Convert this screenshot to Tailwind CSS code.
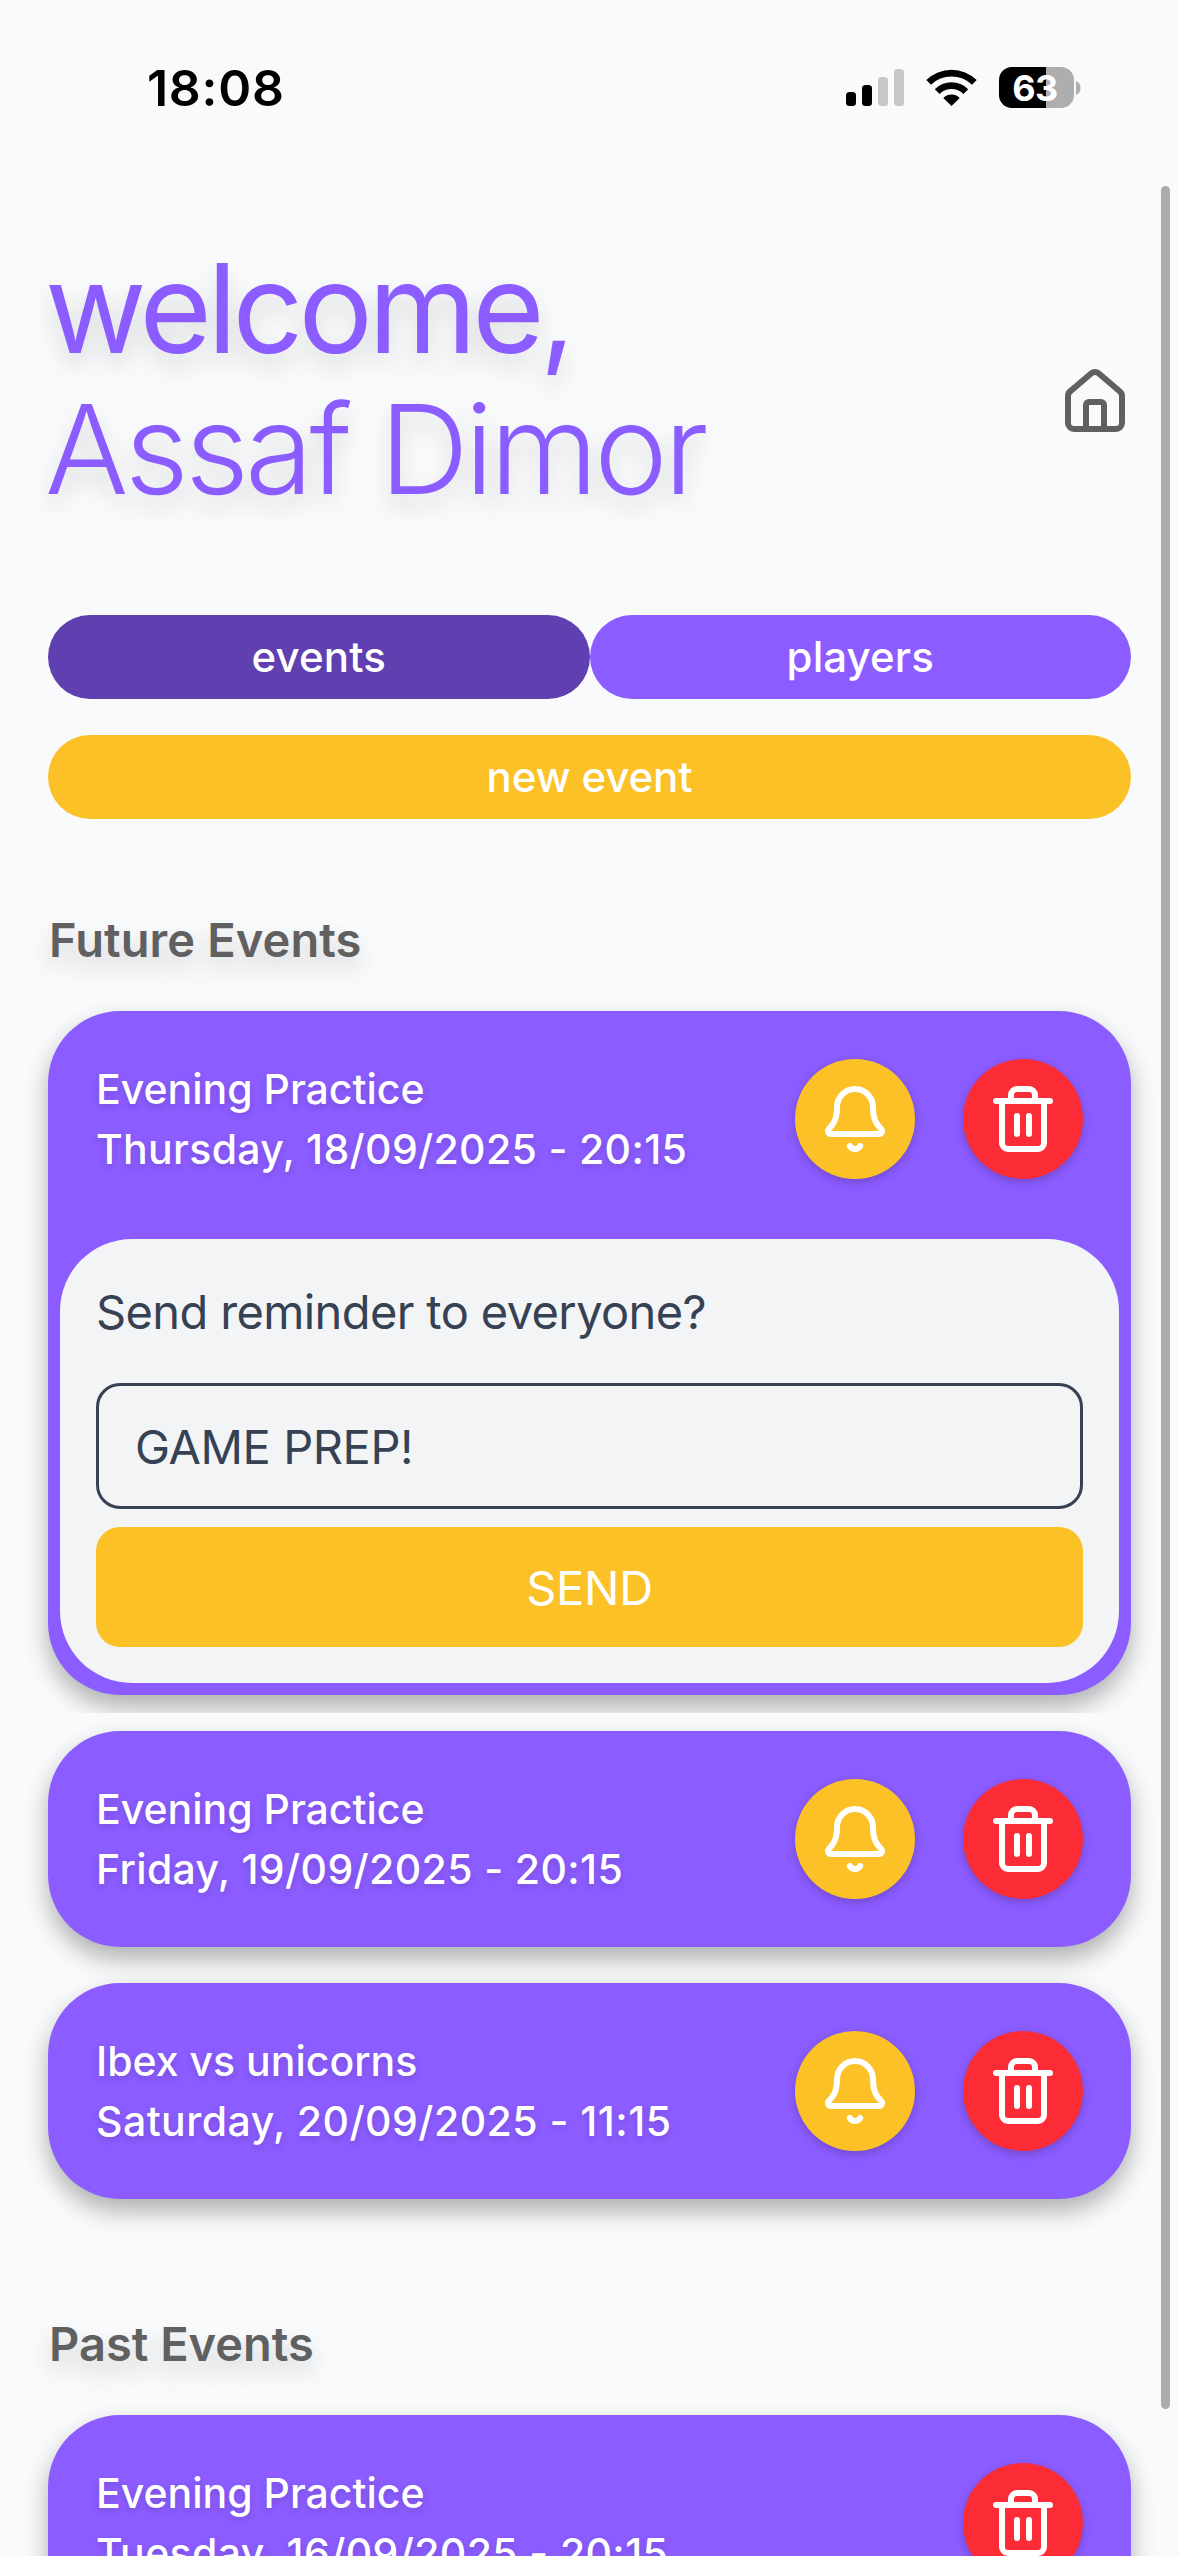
<!DOCTYPE html>
<html lang="en">
<head>
<meta charset="utf-8">
<title>Events</title>
<script src="https://cdn.jsdelivr.net/npm/@tailwindcss/browser@4"></script>
</head>
<body class="relative h-[2556px] w-[1179px] overflow-hidden bg-[#f9fafc] font-['Inter',sans-serif] text-white">

<svg class="hidden">
  <symbol id="bell" viewBox="0 0 24 24" fill="none" stroke="currentColor" stroke-width="2" stroke-linecap="round" stroke-linejoin="round">
    <path d="M10.268 21a2 2 0 0 0 3.464 0"/>
    <path d="M3.262 15.326A1 1 0 0 0 4 17h16a1 1 0 0 0 .74-1.673C19.41 13.956 18 12.499 18 8A6 6 0 0 0 6 8c0 4.499-1.411 5.956-2.738 7.326"/>
  </symbol>
  <symbol id="trash" viewBox="0 0 24 24" fill="none" stroke="currentColor" stroke-width="2" stroke-linecap="round" stroke-linejoin="round">
    <path d="M3 6h18M19 6v14a2 2 0 0 1-2 2H7a2 2 0 0 1-2-2V6M8 6V4a2 2 0 0 1 2-2h4a2 2 0 0 1 2 2v2M10 11v6M14 11v6"/>
  </symbol>
</svg>

<!-- Status bar -->
<div class="flex h-[186px] items-start justify-between pl-[147px] pr-[98px] text-black">
  <div class="mt-[58px] text-[50px] leading-[60px] font-semibold tracking-[0.7px]">18:08</div>
  <div class="mt-[67px] flex h-[41px] items-center">
    <svg class="h-[37px] w-[58px]" viewBox="0 0 58 37">
      <rect x="0" y="23" width="10" height="14" rx="3.5"/>
      <rect x="16" y="16" width="10" height="21" rx="3.5"/>
      <rect x="32" y="8" width="10" height="29" rx="3.5" fill="#c7c7c8"/>
      <rect x="48" y="0" width="10" height="37" rx="3.5" fill="#c7c7c8"/>
    </svg>
    <svg class="ml-[22px] h-[37px] w-[51px]" viewBox="0 0 51 37">
      <path d="M0.3 11 A36 36 0 0 1 50.7 11 L46 15.8 A29.3 29.3 0 0 0 5 15.8 Z"/>
      <path d="M8.8 20.2 A23.5 23.5 0 0 1 42.2 20.2 L37.4 25 A16.8 16.8 0 0 0 13.6 25 Z"/>
      <path d="M17.3 29 A11.6 11.6 0 0 1 33.7 29 L25.5 37 Z"/>
    </svg>
    <div class="ml-[22px] flex h-[41px] w-[75px] items-center justify-center rounded-[13px] bg-linear-to-r from-black from-[62.5%] to-[#aeaeb0] to-[62.5%]">
      <span class="mr-[3px] pt-px text-[36px] leading-[41px] font-bold tracking-[-0.5px] text-white">63</span>
    </div>
    <svg class="ml-[2px] h-[14px] w-[5px]" viewBox="0 0 5 14"><path d="M0 0Q4.500 2 4.500 7T0 14Z" fill="#aeaeb0"/></svg>
  </div>
</div>

<main class="px-12">
  <!-- Greeting -->
  <header class="flex h-[429px] items-start justify-between pt-[52px]">
    <h1 class="text-[124px] leading-[141px] font-normal text-[#8b5cff] [text-shadow:0_12px_24px_rgba(0,0,0,0.15)]">
      <span class="-ml-[3px] block tracking-[-4.7px]">welcome,</span>
      <span class="-ml-[3px] block font-light tracking-[-3.8px]">Assaf Dimor</span>
    </h1>
    <svg class="mt-[128px] size-[72px] text-[#606060]" viewBox="0 0 24 24" fill="none" stroke="currentColor" stroke-width="2" stroke-linecap="round" stroke-linejoin="round">
      <path d="M15 21v-8a1 1 0 0 0-1-1h-4a1 1 0 0 0-1 1v8"/>
      <path d="M3 10a2 2 0 0 1 .709-1.528l7-5.999a2 2 0 0 1 2.582 0l7 5.999A2 2 0 0 1 21 10v9a2 2 0 0 1-2 2H5a2 2 0 0 1-2-2z"/>
    </svg>
  </header>

  <!-- Tabs -->
  <nav class="grid grid-cols-2 gap-y-9 text-[42px] leading-[84px] font-medium">
    <button class="h-[84px] rounded-full bg-[#6040b0] tracking-[0.1px]">events</button>
    <button class="h-[84px] rounded-full bg-[#8b5cff] tracking-[0.1px]">players</button>
    <button class="col-span-2 h-[84px] rounded-full bg-[#fbc126] tracking-[-0.1px]">new event</button>
  </nav>

  <h2 class="mt-[91px] pl-px text-[47px] leading-[60px] font-semibold tracking-[0.1px] text-[#606060] [text-shadow:0_12px_24px_rgba(0,0,0,0.18)]">Future Events</h2>

  <section class="mt-[41px] flex flex-col gap-9">
    <article class="rounded-[72px] bg-[#8b5cff] pb-3 shadow-[0_12px_24px_rgba(0,0,0,0.3)] [clip-path:inset(-40px_-48px_-18px_-48px)]">
      <div class="flex items-center gap-12 p-12 pb-[60px]">
        <div class="grow text-[41px] leading-[60px] font-medium [text-shadow:0_3px_6px_rgba(0,0,0,0.15)]">
          <p>Evening Practice</p>
          <p class="tracking-[0.33px]">Thursday, 18/09/2025 - 20:15</p>
        </div>
        <button class="flex size-[120px] items-center justify-center rounded-full bg-[#fbc126] shadow-[0_3px_9px_rgba(0,0,0,0.2)]"><svg class="size-[72px]"><use href="#bell"/></svg></button>
        <button class="flex size-[120px] items-center justify-center rounded-full bg-[#fb2c36] shadow-[0_3px_9px_rgba(0,0,0,0.2)]"><svg class="size-[72px]"><use href="#trash"/></svg></button>
      </div>
      <div class="mx-3 h-[444px] rounded-[72px] bg-[#f3f4f6] px-9 pt-[37px] text-[47px] text-[#364153]">
        <p class="leading-[72px] tracking-[-0.62px]">Send reminder to everyone?</p>
        <div class="mt-[35px] h-[126px] rounded-3xl border-3 border-[#364153] px-9 pt-px leading-[120px] tracking-[-0.43px]">GAME PREP!</div>
        <button class="mt-[18px] block h-[120px] w-full rounded-3xl bg-[#fbc126] pt-px leading-[120px] tracking-[-0.27px] text-white">SEND</button>
      </div>
    </article>

    <article class="flex items-center gap-12 rounded-[72px] bg-[#8b5cff] p-12 shadow-[0_12px_24px_rgba(0,0,0,0.3)]">
      <div class="grow text-[41px] leading-[60px] font-medium [text-shadow:0_3px_6px_rgba(0,0,0,0.15)]">
        <p>Evening Practice</p>
        <p class="tracking-[0.36px]">Friday, 19/09/2025 - 20:15</p>
      </div>
      <button class="flex size-[120px] items-center justify-center rounded-full bg-[#fbc126] shadow-[0_3px_9px_rgba(0,0,0,0.2)]"><svg class="size-[72px]"><use href="#bell"/></svg></button>
      <button class="flex size-[120px] items-center justify-center rounded-full bg-[#fb2c36] shadow-[0_3px_9px_rgba(0,0,0,0.2)]"><svg class="size-[72px]"><use href="#trash"/></svg></button>
    </article>

    <article class="flex items-center gap-12 rounded-[72px] bg-[#8b5cff] p-12 shadow-[0_12px_24px_rgba(0,0,0,0.3)]">
      <div class="grow text-[41px] leading-[60px] font-medium [text-shadow:0_3px_6px_rgba(0,0,0,0.15)]">
        <p>Ibex vs unicorns</p>
        <p class="tracking-[0.46px]">Saturday, 20/09/2025 - 11:15</p>
      </div>
      <button class="flex size-[120px] items-center justify-center rounded-full bg-[#fbc126] shadow-[0_3px_9px_rgba(0,0,0,0.2)]"><svg class="size-[72px]"><use href="#bell"/></svg></button>
      <button class="flex size-[120px] items-center justify-center rounded-full bg-[#fb2c36] shadow-[0_3px_9px_rgba(0,0,0,0.2)]"><svg class="size-[72px]"><use href="#trash"/></svg></button>
    </article>
  </section>

  <h2 class="mt-[115px] pl-px text-[47px] leading-[60px] font-semibold text-[#606060] [text-shadow:0_12px_24px_rgba(0,0,0,0.18)]">Past Events</h2>

  <section class="mt-[41px]">
    <article class="flex items-center gap-12 rounded-[72px] bg-[#8b5cff] p-12 shadow-[0_12px_24px_rgba(0,0,0,0.3)]">
      <div class="grow text-[41px] leading-[60px] font-medium [text-shadow:0_3px_6px_rgba(0,0,0,0.15)]">
        <p>Evening Practice</p>
        <p class="tracking-[0.36px]">Tuesday, 16/09/2025 - 20:15</p>
      </div>
      <button class="flex size-[120px] items-center justify-center rounded-full bg-[#fb2c36] shadow-[0_3px_9px_rgba(0,0,0,0.2)]"><svg class="size-[72px]"><use href="#trash"/></svg></button>
    </article>
  </section>
</main>

<!-- Scroll indicator -->
<div class="absolute top-[186px] right-[9px] h-[2223px] w-[9px] rounded-full bg-[#ababac]"></div>
</body>
</html>
